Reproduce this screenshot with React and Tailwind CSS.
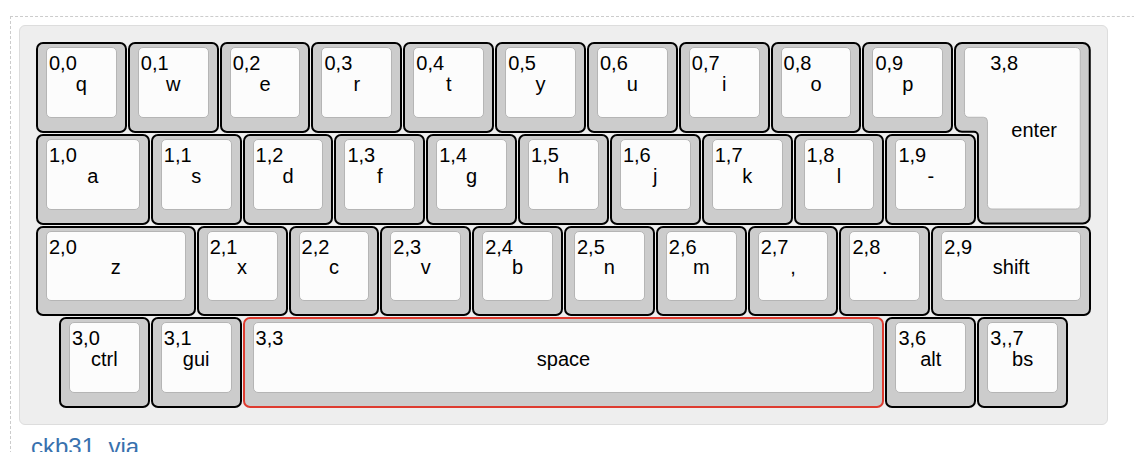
import clsx from "clsx";

// each row: start offset in key units, then [top label, center label, width]
const ROWS = [
  {
    x: 0,
    keys: [
      ["0,0", "q"],
      ["0,1", "w"],
      ["0,2", "e"],
      ["0,3", "r"],
      ["0,4", "t"],
      ["0,5", "y"],
      ["0,6", "u"],
      ["0,7", "i"],
      ["0,8", "o"],
      ["0,9", "p"],
    ],
  },
  {
    x: 0,
    keys: [
      ["1,0", "a", 1.25],
      ["1,1", "s"],
      ["1,2", "d"],
      ["1,3", "f"],
      ["1,4", "g"],
      ["1,5", "h"],
      ["1,6", "j"],
      ["1,7", "k"],
      ["1,8", "l"],
      ["1,9", "-"],
    ],
  },
  {
    x: 0,
    keys: [
      ["2,0", "z", 1.75],
      ["2,1", "x"],
      ["2,2", "c"],
      ["2,3", "v"],
      ["2,4", "b"],
      ["2,5", "n"],
      ["2,6", "m"],
      ["2,7", ","],
      ["2,8", "."],
      ["2,9", "shift", 1.75],
    ],
  },
  {
    x: 0.25,
    keys: [
      ["3,0", "ctrl"],
      ["3,1", "gui"],
      ["3,3", "space", 7, true],
      ["3,6", "alt"],
      ["3,,7", "bs"],
    ],
  },
];

const KEYS = ROWS.flatMap((row, y) => {
  let x = row.x;
  return row.keys.map(([top, center, w = 1, selected = false]) => {
    const key = { x, y, w, top, center, selected };
    x += w;
    return key;
  });
});

// both legends share the one grid cell: top-left and centered
function Labels({ top, center }) {
  return (
    <>
      <div className="col-start-1 row-start-1 self-start justify-self-start pl-[2px] pt-[5px] leading-5">
        {top}
      </div>
      <div className="col-start-1 row-start-1 self-center justify-self-center pt-[3px] leading-5">
        {center}
      </div>
    </>
  );
}

function Key({ k }) {
  return (
    <div
      className="mb-px mr-px"
      style={{
        gridColumn: `${k.x * 4 + 1} / span ${k.w * 4}`,
        gridRow: `${k.y + 1} / span 1`,
      }}
    >
      <div
        className={clsx(
          "h-full rounded-[7px] border-2 bg-[#cccccc] pb-[13px] pl-[8px] pr-[8px] pt-[3px]",
          k.selected ? "border-[#de3b2f]" : "border-black",
        )}
      >
        <div className="grid h-full grid-rows-[1fr] rounded-[5px] border border-[#b5b5b5] bg-[#fcfcfc]">
          <Labels top={k.top} center={k.center} />
        </div>
      </div>
    </div>
  );
}

// ISO enter: the stepped outline is drawn, legends sit on the lower keytop
function EnterKey() {
  return (
    <div
      className="relative mb-px mr-px pb-[15px] pl-[33px] pr-[10px] pt-[5px]"
      style={{ gridColumn: "41 / span 6", gridRow: "1 / span 2" }}
    >
      <svg
        className="absolute inset-0 h-full w-full"
        viewBox="0 0 137 183"
        preserveAspectRatio="none"
      >
        <path
          d="M8 1H129A7 7 0 0 1 136 8V175A7 7 0 0 1 129 182H31A7 7 0 0 1 24 175V94A4 4 0 0 0 20 90H8A7 7 0 0 1 1 83V8A7 7 0 0 1 8 1Z"
          fill="#cccccc"
          stroke="#000"
          strokeWidth="2"
        />
        <path
          d="M15 5.5H122A4.5 4.5 0 0 1 126.5 10V163A4.5 4.5 0 0 1 122 167.5H38A4.5 4.5 0 0 1 33.5 163V79.5A4 4 0 0 0 29.5 75.5H15A4.5 4.5 0 0 1 10.5 71V10A4.5 4.5 0 0 1 15 5.5Z"
          fill="#fcfcfc"
          stroke="#b5b5b5"
          strokeWidth="1"
        />
      </svg>
      <div className="relative grid h-full grid-rows-[1fr] border border-transparent">
        <Labels top="3,8" center="enter" />
      </div>
    </div>
  );
}

export default function App() {
  return (
    <div className="h-[452px] w-[1134px] overflow-hidden bg-white font-['Liberation_Sans',Arial,sans-serif] text-[20px] text-black">
      <div className="ml-[10px] mt-[16px] w-[1200px] border-l border-t border-dashed border-[#cccccc] pl-[8px] pt-[8px]">
        <div className="w-[1089px] rounded-[6px] border border-[#dddddd] bg-[#eeeeee] pb-[15px] pl-[16px] pr-[15px] pt-[16px]">
          <div className="grid h-[367px] w-[1056px] grid-cols-[repeat(46,minmax(0,1fr))] grid-rows-[repeat(4,minmax(0,1fr))]">
            {KEYS.map((k) => (
              <Key key={k.top} k={k} />
            ))}
            <EnterKey />
          </div>
        </div>
        <a
          href="#"
          className="ml-[12px] mt-[10px] block text-[24px] leading-none text-[#3871ae]"
        >
          ckb31_via
        </a>
      </div>
    </div>
  );
}
